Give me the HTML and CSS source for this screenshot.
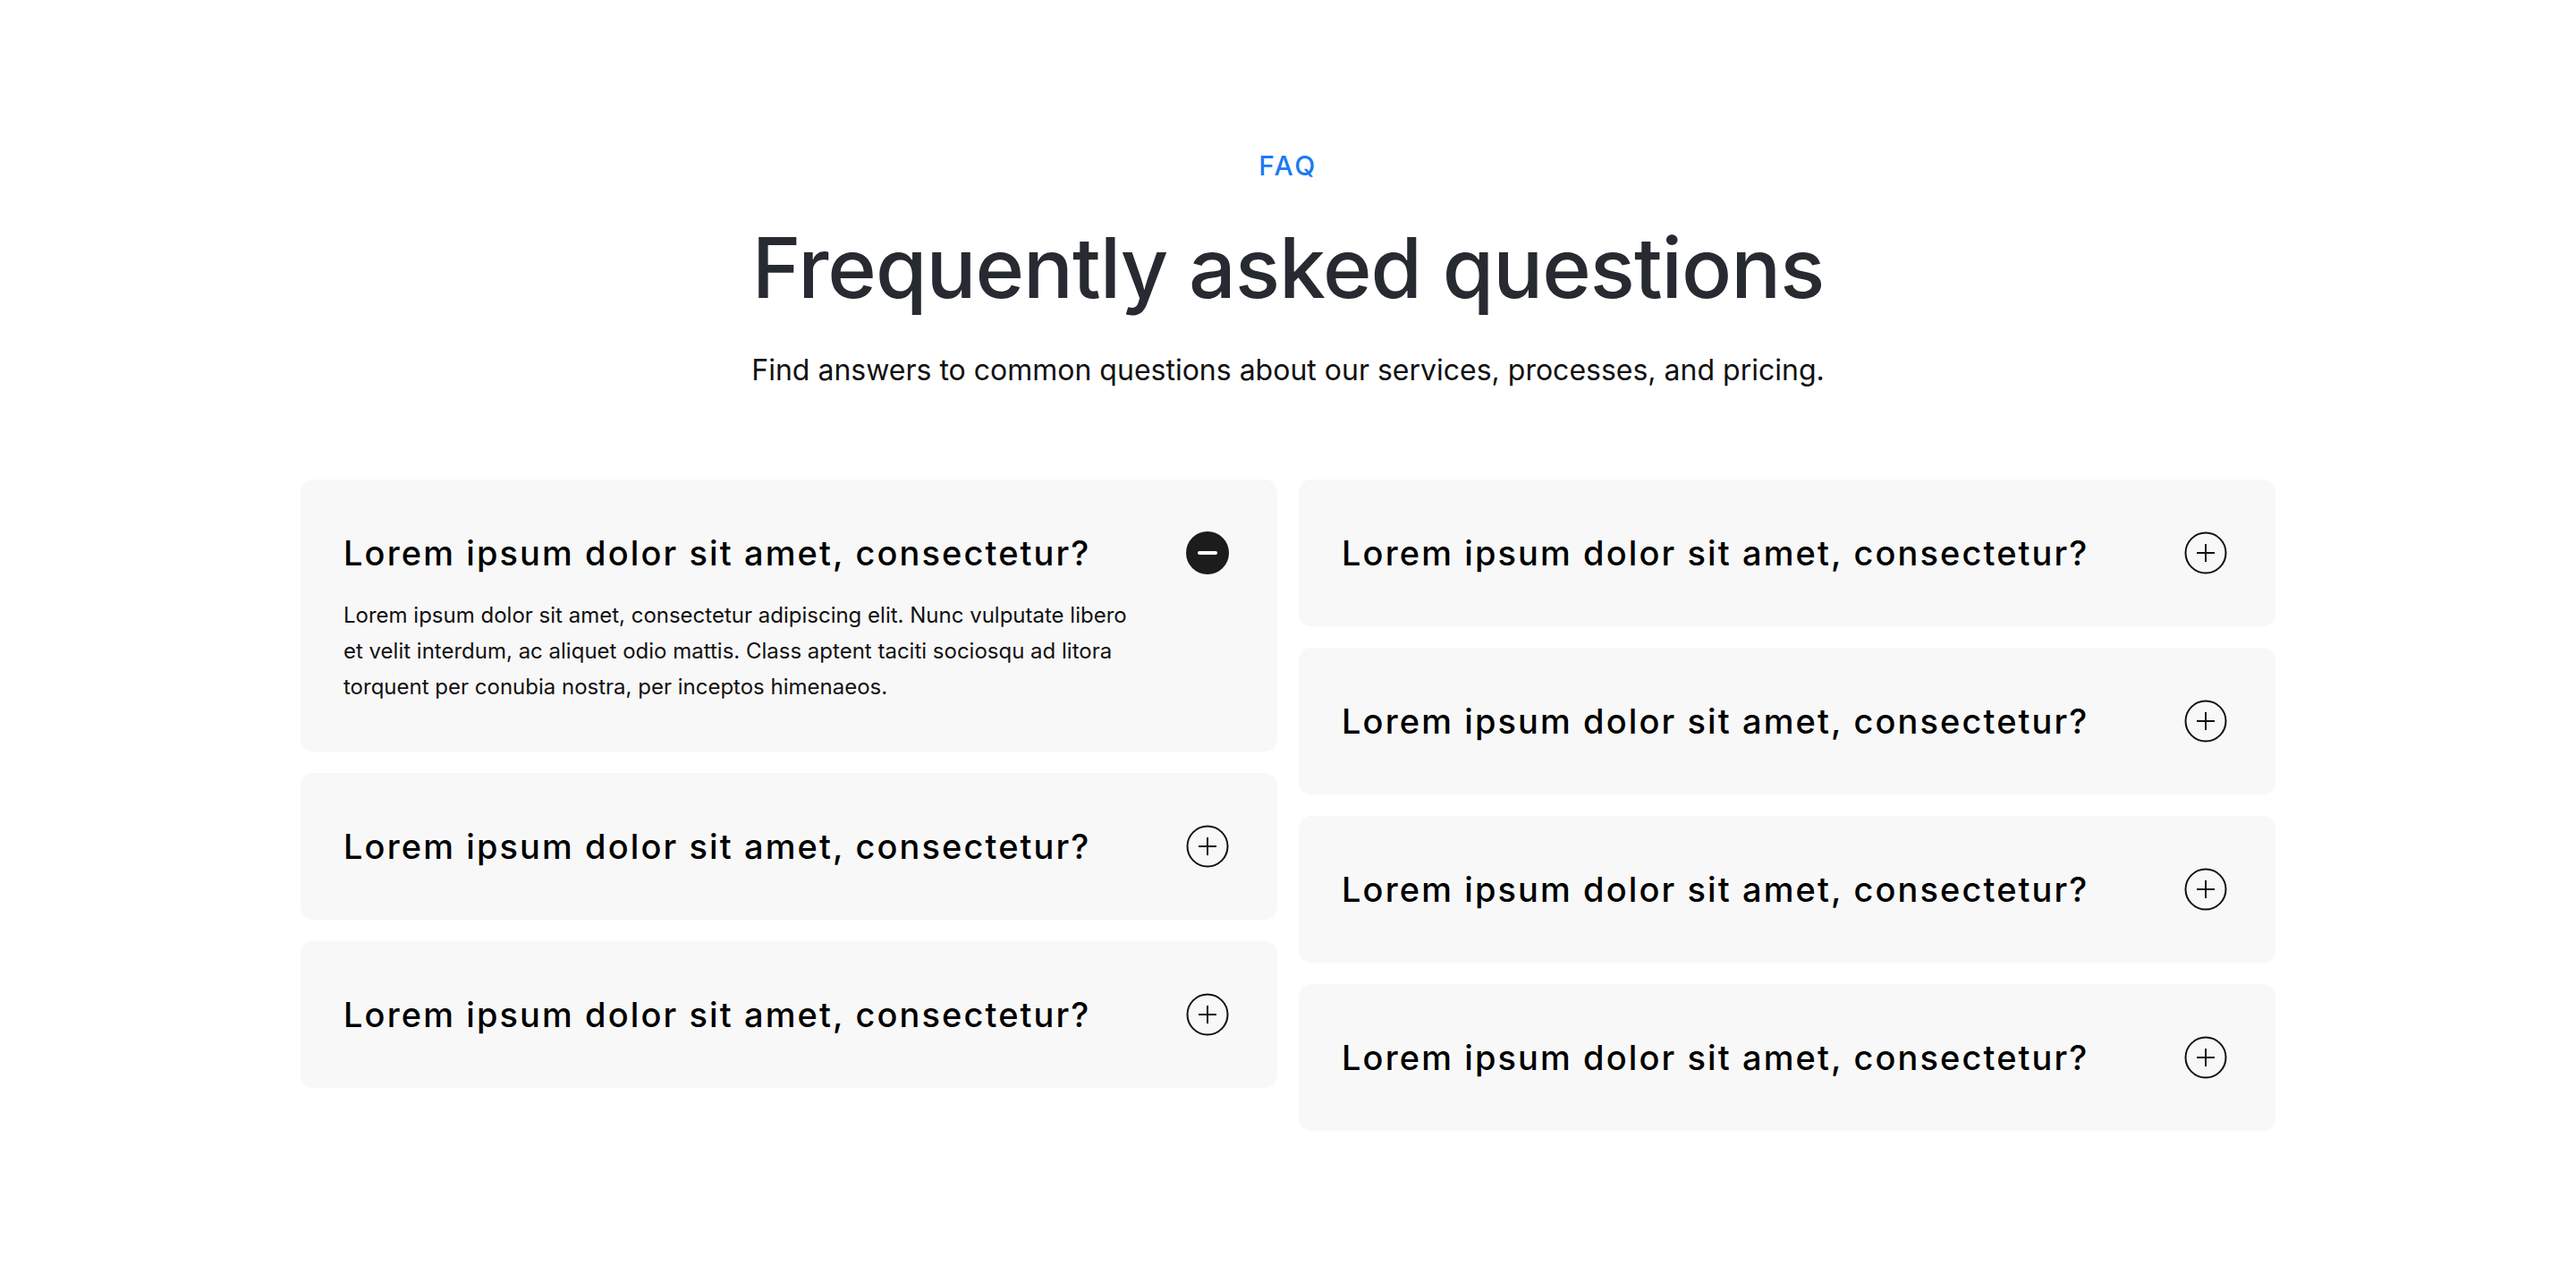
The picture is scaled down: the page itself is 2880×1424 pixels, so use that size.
FILE: index.html
```html
<!DOCTYPE html>
<html lang="en">
<head>
<meta charset="utf-8">
<title>FAQ</title>
<link rel="stylesheet" href="styles.css">
</head>
<body>
<section class="faq">
  <header class="faq-head">
    <p class="eyebrow">FAQ</p>
    <h2 class="title">Frequently asked questions</h2>
    <p class="lead">Find answers to common questions about our services, processes, and pricing.</p>
  </header>
  <div class="grid">
    <div class="col">
      <div class="card open">
        <div class="q-row">
          <h3 class="q">Lorem ipsum dolor sit amet, consectetur?</h3>
          <svg class="ic" viewBox="0 0 48 48" width="48" height="48"><circle cx="24" cy="24" r="24" fill="#1c1c1c"/><rect x="13" y="22" width="22" height="4" rx="2" fill="#fff"/></svg>
        </div>
        <p class="a">Lorem ipsum dolor sit amet, consectetur adipiscing elit. Nunc vulputate libero et velit interdum, ac aliquet odio mattis. Class aptent taciti sociosqu ad litora torquent per conubia nostra, per inceptos himenaeos.</p>
      </div>
      <div class="card">
        <div class="q-row">
          <h3 class="q">Lorem ipsum dolor sit amet, consectetur?</h3>
          <svg class="ic" viewBox="0 0 48 48" width="48" height="48"><circle cx="24" cy="24" r="22.5" fill="none" stroke="#111" stroke-width="2"/><path d="M14 24h20M24 14v20" stroke="#111" stroke-width="2" fill="none"/></svg>
        </div>
      </div>
      <div class="card">
        <div class="q-row">
          <h3 class="q">Lorem ipsum dolor sit amet, consectetur?</h3>
          <svg class="ic" viewBox="0 0 48 48" width="48" height="48"><circle cx="24" cy="24" r="22.5" fill="none" stroke="#111" stroke-width="2"/><path d="M14 24h20M24 14v20" stroke="#111" stroke-width="2" fill="none"/></svg>
        </div>
      </div>
    </div>
    <div class="col">
      <div class="card">
        <div class="q-row">
          <h3 class="q">Lorem ipsum dolor sit amet, consectetur?</h3>
          <svg class="ic" viewBox="0 0 48 48" width="48" height="48"><circle cx="24" cy="24" r="22.5" fill="none" stroke="#111" stroke-width="2"/><path d="M14 24h20M24 14v20" stroke="#111" stroke-width="2" fill="none"/></svg>
        </div>
      </div>
      <div class="card">
        <div class="q-row">
          <h3 class="q">Lorem ipsum dolor sit amet, consectetur?</h3>
          <svg class="ic" viewBox="0 0 48 48" width="48" height="48"><circle cx="24" cy="24" r="22.5" fill="none" stroke="#111" stroke-width="2"/><path d="M14 24h20M24 14v20" stroke="#111" stroke-width="2" fill="none"/></svg>
        </div>
      </div>
      <div class="card">
        <div class="q-row">
          <h3 class="q">Lorem ipsum dolor sit amet, consectetur?</h3>
          <svg class="ic" viewBox="0 0 48 48" width="48" height="48"><circle cx="24" cy="24" r="22.5" fill="none" stroke="#111" stroke-width="2"/><path d="M14 24h20M24 14v20" stroke="#111" stroke-width="2" fill="none"/></svg>
        </div>
      </div>
      <div class="card">
        <div class="q-row">
          <h3 class="q">Lorem ipsum dolor sit amet, consectetur?</h3>
          <svg class="ic" viewBox="0 0 48 48" width="48" height="48"><circle cx="24" cy="24" r="22.5" fill="none" stroke="#111" stroke-width="2"/><path d="M14 24h20M24 14v20" stroke="#111" stroke-width="2" fill="none"/></svg>
        </div>
      </div>
    </div>
  </div>
</section>
</body>
</html>
```
FILE: styles.css
```css
* { box-sizing: border-box; }
html, body { margin: 0; padding: 0; background: #fff; }
body { font-family: Inter, "Liberation Sans", sans-serif; color: #111; }

.faq { width: 2208px; margin: 0 auto; padding-top: 167px; }

.faq-head { display: flex; flex-direction: column; align-items: center; text-align: center; }
.eyebrow { margin: 0; font-size: 30px; line-height: 36px; font-weight: 500; color: #1a7bf2; letter-spacing: 2.5px; }
.title { margin: 40px 0 0; font-size: 93px; line-height: 112px; font-weight: 500; color: #272a31; letter-spacing: -1px; }
.lead { margin: 39px 0 0; font-size: 32px; line-height: 40px; font-weight: 400; color: #111; }

.grid { display: grid; grid-template-columns: 1fr 1fr; column-gap: 24px; margin-top: 102px; align-items: start; }
.col { display: flex; flex-direction: column; gap: 24px; }

.card { background: #f8f8f8; border-radius: 14px; padding: 48px 54px 48px 48px; }
.q-row { display: flex; align-items: center; justify-content: space-between; min-height: 68px; gap: 24px; }
.q { margin: 0; font-size: 38px; line-height: 68px; font-weight: 500; color: #000; letter-spacing: 2.1px; }
.ic { flex: 0 0 48px; display: block; }
.a { margin: 16px 0 0; max-width: 890px; padding-bottom: 4px; font-size: 24px; line-height: 40px; color: #111; }
```
